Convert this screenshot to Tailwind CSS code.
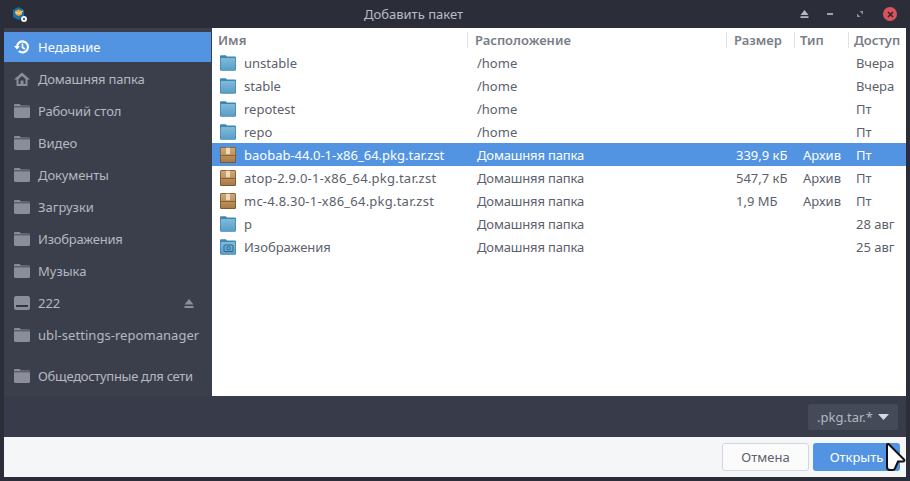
<!DOCTYPE html>
<html lang="ru">
<head>
    <meta charset="UTF-8">
    <title>Добавить пакет</title>
    <script src="https://cdn.jsdelivr.net/npm/@tailwindcss/browser@4"></script>
</head>
<body class="w-[910px] h-[481px] overflow-hidden bg-[#2b2e39] font-['Noto_Sans','Open_Sans',sans-serif] text-[13px] leading-[18px]">
    <svg class="absolute w-0 h-0">
        <defs>
            <linearGradient id="folder-fill" x1="0" y1="0" x2="0" y2="1">
                <stop offset="0" stop-color="#7fbbdb"/>
                <stop offset="1" stop-color="#5a9dc5"/>
            </linearGradient>
            <linearGradient id="pkg-fill" x1="0" y1="0" x2="0" y2="1">
                <stop offset="0" stop-color="#d2aa76"/>
                <stop offset="1" stop-color="#a87a45"/>
            </linearGradient>
        </defs>
        <symbol id="side-folder" viewBox="0 0 16 16">
            <path d="M0 2.500C0 1.700.5 1 1.300 1h4.200l1.300 1.500h7.900c.7 0 1.300.6 1.300 1.300V4H0z" fill="#8b8e9a"/>
            <path d="M0 4.200h16v9.600c0 .7-.6 1.200-1.200 1.200H1.200C.6 15 0 14.500 0 13.800z" fill="#8b8e9a"/>
            <path d="M0 3.500h16" stroke="#3b3f4c" stroke-width=".6"/>
        </symbol>
        <symbol id="blue-folder" viewBox="0 0 18 18">
            <path d="M1 2.500C1 1.800 1.500 1.300 2.200 1.300h4.600L8 2.500h7.800c.7 0 1.200.5 1.200 1.200V6H1z" fill="#3f86ad"/>
            <rect x="1" y="3.400" width="16" height="13.300" rx="1.500" fill="#3f86ad"/>
            <rect x="1.700" y="4.100" width="14.600" height="12" rx="1" fill="url(#folder-fill)"/>
        </symbol>
        <symbol id="pic-folder" viewBox="0 0 18 18">
            <use href="#blue-folder"/>
            <rect x="5" y="7" width="9" height="6.500" rx="1" fill="none" stroke="#2a6a92" stroke-width="1"/>
            <circle cx="9.500" cy="10.200" r="1.700" fill="none" stroke="#2a6a92"/>
        </symbol>
        <symbol id="pkg" viewBox="0 0 18 18">
            <rect x="1" y="1" width="16" height="16" rx="1.500" fill="#6f4c26"/>
            <rect x="1.700" y="1.700" width="14.600" height="14.600" rx="1" fill="url(#pkg-fill)"/>
            <rect x="1.700" y="9" width="14.600" height="1" fill="#8c6234"/>
            <rect x="7" y="1.700" width="4" height="6.500" fill="#ecd9b8"/>
        </symbol>
    </svg>

    <div class="flex h-[28px] items-center">
        <svg class="ml-[12px] w-[15px] h-[16px]" viewBox="0 0 15 16">
            <path d="M6.500 1l5.500 3v7l-5.500 3L1 11V4z" fill="#1c6f9e"/>
            <path d="M3.500 5l3-1.500L10 5v3.500L6.500 10 3.500 8.500z" fill="#e9a93f"/>
            <path d="M3 6l4 1.500L11 5" stroke="#f4e3b0" fill="none"/>
            <circle cx="12" cy="13" r="3" fill="#f2f2f2"/>
            <circle cx="12" cy="13" r="1" fill="#2b2e39"/>
        </svg>
        <div class="flex-1 text-center text-[#b9bcc4]">Добавить пакет</div>
        <div class="flex items-center mr-[13px]">
            <svg class="w-[9px] h-[8px] mr-[18px]" viewBox="0 0 10 9"><path d="M5 0l4.500 5.500h-9zM.5 7h9v2h-9z" fill="#b6b9c1"/></svg>
            <svg class="w-[6px] h-[2px] mr-[24px]" viewBox="0 0 7 2"><rect width="7" height="2" fill="#b6b9c1"/></svg>
            <svg class="w-[6px] h-[6px] mr-[20px]" viewBox="0 0 7 7"><path d="M3 0h4v4zM0 3l4 4H0z" fill="#8f929b"/></svg>
            <div class="w-[14px] h-[14px] rounded-full bg-[#d9535f] flex items-center justify-center">
                <svg class="w-[7px] h-[7px]" viewBox="0 0 7 7"><path d="M1 1l5 5M6 1L1 6" stroke="#33262c" stroke-width="1.600"/></svg>
            </div>
        </div>
    </div>

    <div class="flex h-[368px] mx-[4px]">
        <aside class="w-[208px] bg-[#3b3f4c] pt-[4px] text-[#b5b8c0]">
            <div class="flex items-center h-[30px] bg-[#5294e2] text-white pl-[10px] mr-[1px]">
                <svg class="w-[16px] h-[16px] mr-[8px]" viewBox="0 0 16 16">
                    <path d="M3 8a5.500 5.500 0 1 1 1.800 4" fill="none" stroke="#fff" stroke-width="2.200"/>
                    <path d="M0 7h6l-3 3.500z" fill="#fff"/>
                    <path d="M8.500 4.500V8.500l2.500 1.500" fill="none" stroke="#fff" stroke-width="1.600"/>
                </svg>
                Недавние
            </div>
            <div class="flex items-center h-[32px] mt-[1px] pl-[10px]">
                <svg class="w-[16px] h-[16px] mr-[8px]" viewBox="0 0 16 16">
                    <path fill-rule="evenodd" d="M8 1.500L0 8.500h2.500V15h11V8.500H16zM4.500 8l3.500-3 3.500 3v5h-2v-3.500h-3V13h-2z" fill="#8b8e9a"/>
                </svg>
                <span class="tracking-[-0.2px]">Домашняя папка</span>
            </div>
            <div class="flex items-center h-[32px] pl-[10px]"><svg class="w-[16px] h-[16px] mr-[8px]"><use href="#side-folder"/></svg><span class="tracking-[-0.15px]">Рабочий стол</span></div>
            <div class="flex items-center h-[32px] pl-[10px]"><svg class="w-[16px] h-[16px] mr-[8px]"><use href="#side-folder"/></svg>Видео</div>
            <div class="flex items-center h-[32px] pl-[10px]"><svg class="w-[16px] h-[16px] mr-[8px]"><use href="#side-folder"/></svg><span class="tracking-[-0.1px]">Документы</span></div>
            <div class="flex items-center h-[32px] pl-[10px]"><svg class="w-[16px] h-[16px] mr-[8px]"><use href="#side-folder"/></svg>Загрузки</div>
            <div class="flex items-center h-[32px] pl-[10px]"><svg class="w-[16px] h-[16px] mr-[8px]"><use href="#side-folder"/></svg><span class="tracking-[-0.2px]">Изображения</span></div>
            <div class="flex items-center h-[32px] pl-[10px]"><svg class="w-[16px] h-[16px] mr-[8px]"><use href="#side-folder"/></svg>Музыка</div>
            <div class="flex items-center h-[32px] pl-[10px]">
                <svg class="w-[16px] h-[14px] mr-[8px]" viewBox="0 0 16 14">
                    <path d="M2 0h12c1 0 2 1 2 2v10c0 1-1 2-2 2H2c-1 0-2-1-2-2V2C0 1 1 0 2 0z" fill="#8b8e9a"/>
                    <rect x="2" y="9" width="12" height="2" fill="#33363f"/>
                </svg>
                <span class="flex-1">222</span>
                <svg class="w-[10px] h-[9px] mr-[18px]" viewBox="0 0 10 9"><path d="M5 0l4.500 5.500h-9zM.5 7h9v2h-9z" fill="#8b8e9a"/></svg>
            </div>
            <div class="flex items-center h-[32px] pl-[10px]"><svg class="w-[16px] h-[16px] mr-[8px]"><use href="#side-folder"/></svg><span class="tracking-[0.05px]">ubl-settings-repomanager</span></div>
            <div class="flex items-center h-[32px] mt-[9px] pl-[10px]"><svg class="w-[16px] h-[16px] mr-[8px]"><use href="#side-folder"/></svg><span class="tracking-[-0.3px]">Общедоступные для сети</span></div>
        </aside>

        <main class="w-[694px] bg-white text-[#5c616c]">
            <div class="flex h-[23px] pt-[1px] items-center font-semibold text-[#7a7e87]">
                <div class="w-[256px] h-[16px] pl-[6px] border-r border-[#dfe1e3] flex items-center">Имя</div>
                <div class="w-[259px] h-[16px] pl-[7px] border-r border-[#dfe1e3] flex items-center">Расположение</div>
                <div class="w-[68px] h-[16px] pl-[7px] border-r border-[#dfe1e3] flex items-center">Размер</div>
                <div class="w-[54px] h-[16px] pl-[5px] border-r border-[#dfe1e3] flex items-center">Тип</div>
                <div class="pl-[5px]">Доступ</div>
            </div>

            <div class="flex h-[23px] items-center">
                <svg class="ml-[7px] mr-[7px] w-[18px] h-[18px]"><use href="#blue-folder"/></svg>
                <div class="w-[233px]">unstable</div><div class="w-[259px]">/home</div><div class="w-[67px]"></div><div class="w-[53px]"></div><div>Вчера</div>
            </div>
            <div class="flex h-[23px] items-center">
                <svg class="ml-[7px] mr-[7px] w-[18px] h-[18px]"><use href="#blue-folder"/></svg>
                <div class="w-[233px]">stable</div><div class="w-[259px]">/home</div><div class="w-[67px]"></div><div class="w-[53px]"></div><div>Вчера</div>
            </div>
            <div class="flex h-[23px] items-center">
                <svg class="ml-[7px] mr-[7px] w-[18px] h-[18px]"><use href="#blue-folder"/></svg>
                <div class="w-[233px]">repotest</div><div class="w-[259px]">/home</div><div class="w-[67px]"></div><div class="w-[53px]"></div><div>Пт</div>
            </div>
            <div class="flex h-[23px] items-center">
                <svg class="ml-[7px] mr-[7px] w-[18px] h-[18px]"><use href="#blue-folder"/></svg>
                <div class="w-[233px]">repo</div><div class="w-[259px]">/home</div><div class="w-[67px]"></div><div class="w-[53px]"></div><div>Пт</div>
            </div>
            <div class="flex h-[23px] items-center bg-[#5294e2] text-white">
                <svg class="ml-[7px] mr-[7px] w-[18px] h-[18px]"><use href="#pkg"/></svg>
                <div class="w-[233px]">baobab-44.0-1-x86_64.pkg.tar.zst</div><div class="w-[259px] tracking-[-0.15px]">Домашняя папка</div><div class="w-[67px]">339,9 кБ</div><div class="w-[53px]">Архив</div><div>Пт</div>
            </div>
            <div class="flex h-[23px] items-center">
                <svg class="ml-[7px] mr-[7px] w-[18px] h-[18px]"><use href="#pkg"/></svg>
                <div class="w-[233px] tracking-[0.23px]">atop-2.9.0-1-x86_64.pkg.tar.zst</div><div class="w-[259px] tracking-[-0.15px]">Домашняя папка</div><div class="w-[67px]">547,7 кБ</div><div class="w-[53px]">Архив</div><div>Пт</div>
            </div>
            <div class="flex h-[23px] items-center">
                <svg class="ml-[7px] mr-[7px] w-[18px] h-[18px]"><use href="#pkg"/></svg>
                <div class="w-[233px] tracking-[0.23px]">mc-4.8.30-1-x86_64.pkg.tar.zst</div><div class="w-[259px] tracking-[-0.15px]">Домашняя папка</div><div class="w-[67px]">1,9 МБ</div><div class="w-[53px]">Архив</div><div>Пт</div>
            </div>
            <div class="flex h-[23px] items-center">
                <svg class="ml-[7px] mr-[7px] w-[18px] h-[18px]"><use href="#blue-folder"/></svg>
                <div class="w-[233px]">p</div><div class="w-[259px] tracking-[-0.15px]">Домашняя папка</div><div class="w-[67px]"></div><div class="w-[53px]"></div><div>28 авг</div>
            </div>
            <div class="flex h-[23px] items-center">
                <svg class="ml-[7px] mr-[7px] w-[18px] h-[18px]"><use href="#pic-folder"/></svg>
                <div class="w-[233px]">Изображения</div><div class="w-[259px] tracking-[-0.15px]">Домашняя папка</div><div class="w-[67px]"></div><div class="w-[53px]"></div><div>25 авг</div>
            </div>
        </main>
    </div>

    <div class="flex h-[41px] mx-[4px] bg-[#383c4a] justify-end items-center">
        <div class="flex items-center justify-center w-[92px] h-[28px] mr-[7px] rounded-[3px] bg-[#444a58] border border-[#373b47] text-[#b5b8c0]">
            .pkg.tar.*
            <svg class="w-[11px] h-[6px] ml-[5px]" viewBox="0 0 11 6"><path d="M0 0h11L5.500 6z" fill="#d3dae3"/></svg>
        </div>
    </div>

    <div class="relative flex h-[40px] mx-[4px] bg-[#f5f6f7] justify-end items-center">
        <div class="flex items-center justify-center w-[87px] h-[28px] rounded-[3px] bg-[#fbfbfc] border border-[#cfd6e6] text-[#5c616c]">Отмена</div>
        <div class="flex items-center justify-center w-[87px] h-[28px] ml-[4px] mr-[6px] rounded-[3px] bg-[#5294e2] text-white">Открыть</div>
        <svg class="absolute left-[881px] top-[6px] w-[24px] h-[30px]" viewBox="0 0 24 30">
            <path d="M2 2c0-1 1-1.500 2-.5l15 15c.8.800.3 2-1 2h-5l-3 7c-.5 1-1.200 1.500-2.500 1.500H5c-2 0-3-1.500-3-3z" fill="#fff" stroke="#111" stroke-width="2"/>
        </svg>
    </div>
</body>
</html>
